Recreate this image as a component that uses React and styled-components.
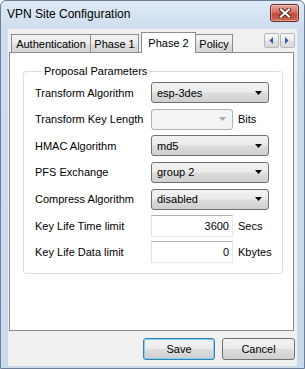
import React from 'react'
import styled, { createGlobalStyle, css } from 'styled-components'

const GlobalStyle = createGlobalStyle`
  html, body {
    margin: 0;
    padding: 0;
    background: #ffffff;
  }
  body {
    font-family: "Liberation Sans", Arial, sans-serif;
    font-size: 11px;
    color: #000;
  }
  * { box-sizing: border-box; }
`

const buttonFace = css`
  background: linear-gradient(to bottom, #f2f2f2 0%, #ebebeb 48%, #dddddd 52%, #cfcfcf 100%);
  border: 1px solid #707070;
  border-radius: 3px;
`

const Window = styled.div`
  width: 305px;
  height: 369px;
  display: flex;
  flex-direction: column;
  border: 1px solid #6d7f96;
  border-radius: 6px 6px 0 0;
  background: linear-gradient(to bottom, #dfeaf6 0px, #cddcee 28px, #c9daec 100%);
  overflow: hidden;
`

const TitleBar = styled.div`
  height: 28px;
  flex: none;
  display: flex;
  justify-content: space-between;
  align-items: flex-start;
  padding-left: 6px;
`

const Title = styled.div`
  font-size: 12px;
  line-height: 26px;
  color: #000;
`

const CloseButton = styled.div`
  width: 29px;
  height: 18px;
  margin-top: 3px;
  margin-right: 5px;
  display: flex;
  align-items: center;
  justify-content: center;
  border: 1px solid #6a2a2a;
  border-radius: 3px;
  background: linear-gradient(to bottom, #e3a89f 0%, #d4705f 45%, #c14a36 55%, #cf6a4f 100%);
  box-shadow: inset 0 0 0 1px rgba(255, 255, 255, 0.35);
`

const Client = styled.div`
  flex: 1;
  margin: 0 7px 2px 7px;
  background: #f0f0f0;
  display: flex;
  flex-direction: column;
  padding: 0 2px 0 1px;
`

const TabStrip = styled.div`
  height: 23px;
  flex: none;
  display: flex;
  align-items: flex-end;
  padding-left: 2px;
`

const Tab = styled.div`
  width: ${p => p.$w}px;
  height: 18px;
  margin-left: -1px;
  display: flex;
  align-items: center;
  justify-content: center;
  padding-top: 1px;
  border: 1px solid #898c95;
  border-bottom: none;
  background: linear-gradient(to bottom, #f3f3f3 0%, #ebebeb 50%, #dedede 52%, #d5d5d5 100%);
  white-space: nowrap;

  &:first-child { margin-left: 0; }

  ${p => p.$active && css`
    height: 21px;
    margin-left: 2px;
    margin-bottom: -1px;
    padding-top: 0;
    padding-bottom: 1px;
    background: #ffffff;
    position: relative;
    z-index: 1;
  `}
`

const Scroller = styled.div`
  margin-left: auto;
  align-self: flex-start;
  margin-top: 4px;
  display: flex;
  gap: 1px;
`

const ScrollBtn = styled.div`
  width: 15px;
  height: 15px;
  display: flex;
  align-items: center;
  justify-content: center;
  border: 1px solid #b4b8bd;
  border-radius: 2px;
  background: linear-gradient(to bottom, #f7f7f7 0%, #ececec 50%, #e1e1e1 52%, #d9d9d9 100%);
`

const Panel = styled.div`
  height: 279px;
  width: 285px;
  flex: none;
  border: 1px solid #898c95;
  background: #ffffff;
  padding: 12px 0 0 13px;
`

const Group = styled.fieldset`
  margin: 0;
  width: 260px;
  height: 209px;
  border: 1px solid #d5dfe5;
  border-radius: 3px;
  padding: 4px 0 0 11px;
  min-width: 0;
`

const Legend = styled.legend`
  margin-left: 7px;
  padding: 0 2px;
  line-height: 13px;
  font-size: 11px;
`

const Rows = styled.div`
  display: grid;
  grid-auto-rows: 21px;
  row-gap: 5.67px;
`

const Row = styled.div`
  display: flex;
  align-items: center;
`

const Label = styled.div`
  width: 116px;
  flex: none;
`

const Combo = styled.div`
  width: ${p => p.$w}px;
  height: 21px;
  display: flex;
  align-items: center;
  justify-content: space-between;
  padding: 0 6px 0 5px;
  ${buttonFace}

  ${p => p.$disabled && css`
    background: #f4f4f4;
    border-color: #adb2b5;
  `}
`

const TextBox = styled.div`
  width: 82px;
  height: 22px;
  display: flex;
  align-items: center;
  justify-content: flex-end;
  padding-right: 3px;
  background: #ffffff;
  border: 1px solid #e3e9ef;
  border-top-color: #abadb3;
  border-left-color: #dbdfe6;
`

const Unit = styled.div`
  margin-left: 5px;
`

const Footer = styled.div`
  display: flex;
  justify-content: flex-end;
  gap: 7px;
  margin-top: 7px;
`

const Button = styled.div`
  width: ${p => p.$w}px;
  height: 22px;
  display: flex;
  align-items: center;
  justify-content: center;
  ${buttonFace}

  ${p => p.$default && css`
    border-color: #3c7fb1;
    box-shadow: inset 0 0 0 1px #7ad0f5;
  `}
`

function Arrow({ color = '#000' }) {
  return (
    <svg width="7" height="4" viewBox="0 0 7 4">
      <path d="M0 0 H7 L3.5 4 Z" fill={color} />
    </svg>
  )
}

function CloseGlyph() {
  return (
    <svg width="12" height="10" viewBox="0 0 12 10">
      <path d="M2 1.5 L10 8.5 M10 1.5 L2 8.5" stroke="#5a1a12" strokeWidth="4" strokeLinecap="square" />
      <path d="M2 1.5 L10 8.5 M10 1.5 L2 8.5" stroke="#ffffff" strokeWidth="2.2" strokeLinecap="square" />
    </svg>
  )
}

function ScrollArrow({ dir }) {
  const d = dir === 'left' ? 'M4 0 V7 L0.5 3.5 Z' : 'M0 0 V7 L3.5 3.5 Z'
  return (
    <svg width="5" height="7" viewBox="0 0 5 7">
      <path d={d} fill="#2c5ba4" />
    </svg>
  )
}

const params = [
  { label: 'Transform Algorithm', kind: 'combo', value: 'esp-3des' },
  { label: 'Transform Key Length', kind: 'combo', value: '', disabled: true, unit: 'Bits' },
  { label: 'HMAC Algorithm', kind: 'combo', value: 'md5' },
  { label: 'PFS Exchange', kind: 'combo', value: 'group 2' },
  { label: 'Compress Algorithm', kind: 'combo', value: 'disabled' },
  { label: 'Key Life Time limit', kind: 'text', value: '3600', unit: 'Secs' },
  { label: 'Key Life Data limit', kind: 'text', value: '0', unit: 'Kbytes' },
]

const tabs = [
  { name: 'Authentication', w: 80 },
  { name: 'Phase 1', w: 49 },
  { name: 'Phase 2', w: 55, active: true },
  { name: 'Policy', w: 38 },
]

export default function App() {
  return (
    <>
      <GlobalStyle />
      <Window>
        <TitleBar>
          <Title>VPN Site Configuration</Title>
          <CloseButton><CloseGlyph /></CloseButton>
        </TitleBar>
        <Client>
          <TabStrip>
            {tabs.map(t => (
              <Tab key={t.name} $w={t.w} $active={t.active}>{t.name}</Tab>
            ))}
            <Scroller>
              <ScrollBtn><ScrollArrow dir="left" /></ScrollBtn>
              <ScrollBtn><ScrollArrow dir="right" /></ScrollBtn>
            </Scroller>
          </TabStrip>
          <Panel>
            <Group>
              <Legend>Proposal Parameters</Legend>
              <Rows>
                {params.map(p => (
                  <Row key={p.label}>
                    <Label>{p.label}</Label>
                    {p.kind === 'combo' ? (
                      <Combo $w={p.unit ? 82 : 118} $disabled={p.disabled}>
                        <span>{p.value}</span>
                        <Arrow color={p.disabled ? '#a7a7a7' : '#000'} />
                      </Combo>
                    ) : (
                      <TextBox>{p.value}</TextBox>
                    )}
                    {p.unit && <Unit>{p.unit}</Unit>}
                  </Row>
                ))}
              </Rows>
            </Group>
          </Panel>
          <Footer>
            <Button $w={72} $default>Save</Button>
            <Button $w={73}>Cancel</Button>
          </Footer>
        </Client>
      </Window>
    </>
  )
}
